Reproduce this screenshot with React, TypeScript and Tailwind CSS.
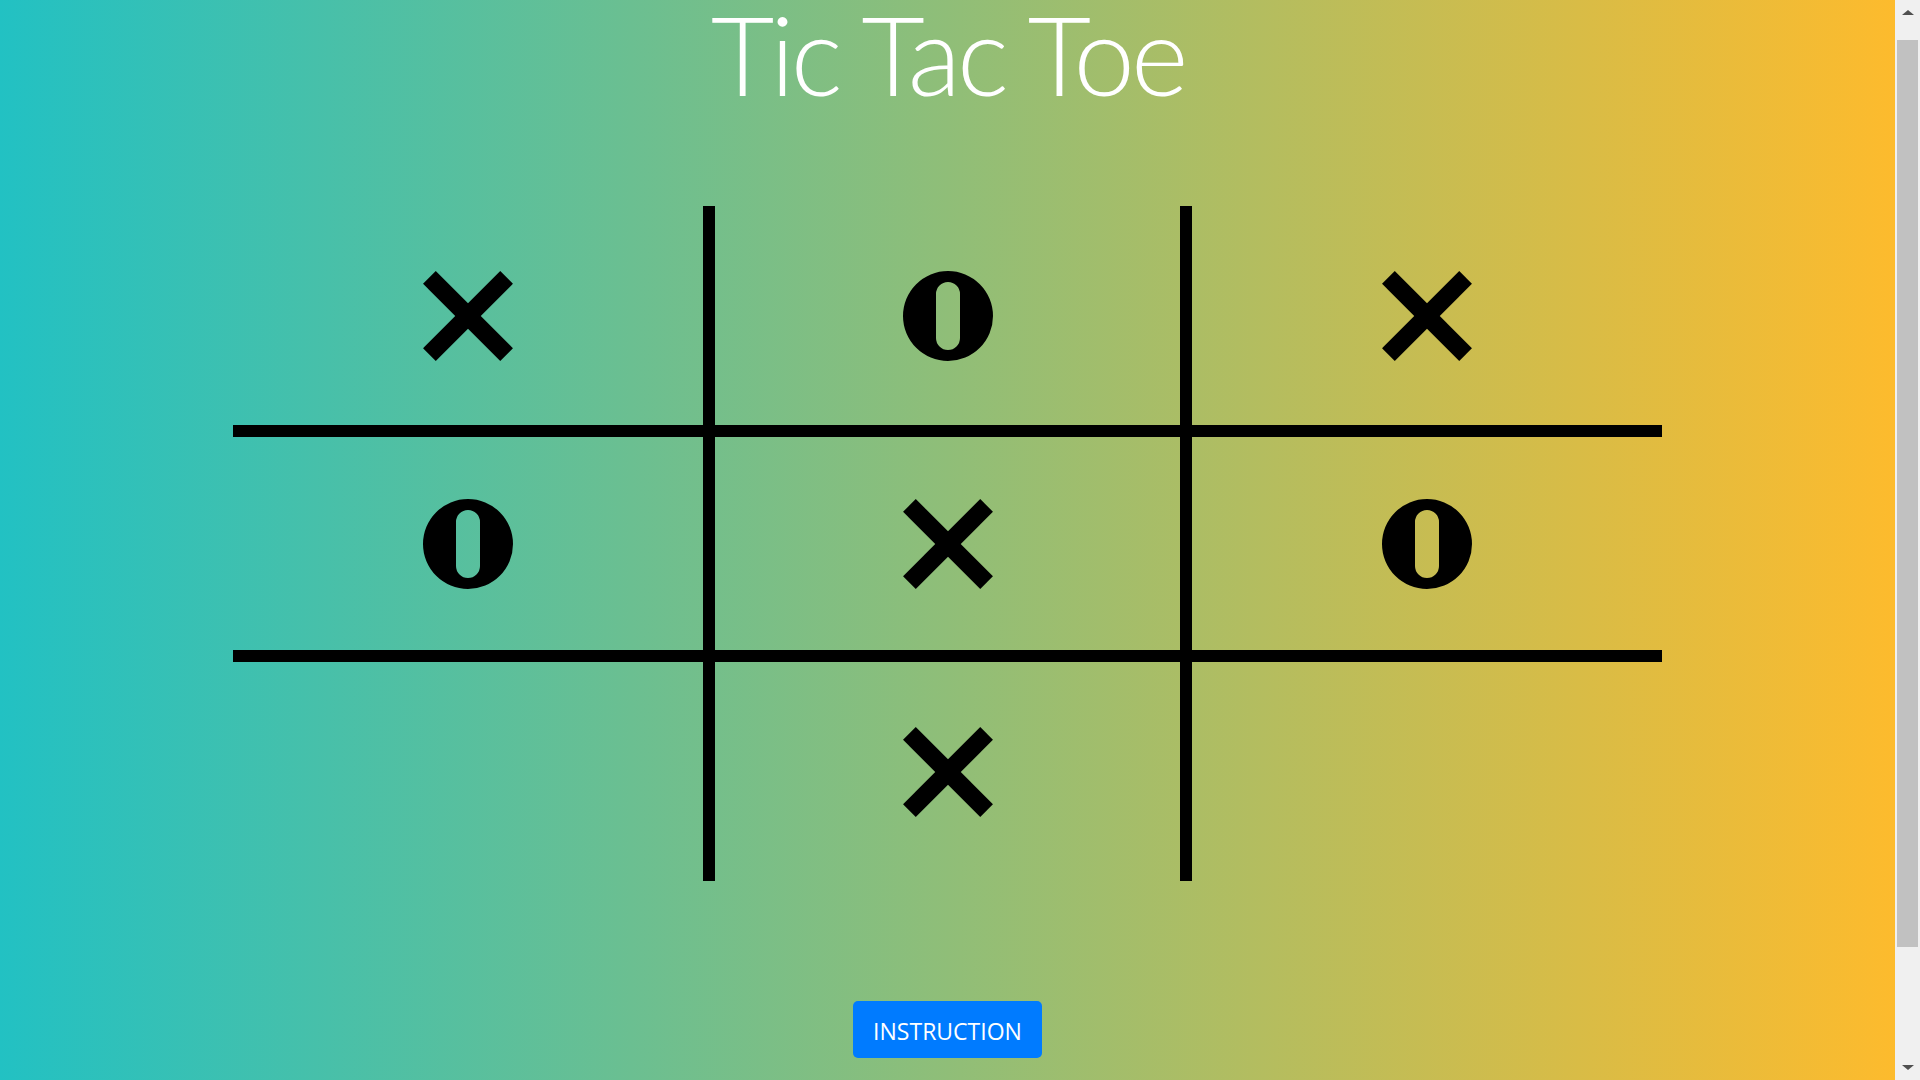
import React from 'react';

type Mark = 'X' | 'O' | null;

const BOARD: Mark[] = ['X', 'O', 'X', 'O', 'X', 'O', null, 'X', null];

function CrossMark() {
  return (
    <svg width="90" height="90" viewBox="0 0 90 90">
      <line x1="6.4" y1="6.4" x2="83.6" y2="83.6" stroke="#000" strokeWidth="18" />
      <line x1="83.6" y1="6.4" x2="6.4" y2="83.6" stroke="#000" strokeWidth="18" />
    </svg>
  );
}

function NoughtMark() {
  return (
    <svg width="90" height="90" viewBox="0 0 90 90">
      <path
        fillRule="evenodd"
        fill="#000"
        d="M0,45 a45,45 0 1,0 90,0 a45,45 0 1,0 -90,0 Z M33,23 a12,12 0 0,1 24,0 V67 a12,12 0 0,1 -24,0 Z"
      />
    </svg>
  );
}

// Cell borders draw the grid lines: middle column gets left/right, middle row gets top/bottom.
const CELL_CLASSES = [
  '',
  'border-x-[12px]',
  '',
  'border-y-[12px]',
  'border-[12px]',
  'border-y-[12px]',
  '',
  'border-x-[12px]',
  '',
];

function Board() {
  return (
    <div className="mt-[99px] grid w-[1429px] grid-cols-[470px_489px_470px] grid-rows-[219px_237px_219px]">
      {BOARD.map((mark, i) => (
        <div
          key={i}
          className={`flex items-center justify-center border-black ${CELL_CLASSES[i]}`}
        >
          {mark === 'X' && <CrossMark />}
          {mark === 'O' && <NoughtMark />}
        </div>
      ))}
    </div>
  );
}

function Scrollbar() {
  return (
    <div className="flex h-screen w-[25px] shrink-0 flex-col bg-[#f0f0f0]">
      <div className="flex h-[40px] justify-center pt-[10px]">
        <div className="h-0 w-0 border-x-[6px] border-b-[5px] border-x-transparent border-b-[#505050]" />
      </div>
      <div className="mx-[2px] h-[907px] bg-[#c1c1c1]" />
      <div className="flex flex-1 items-end justify-center pb-[10px]">
        <div className="h-0 w-0 border-x-[6px] border-t-[5px] border-x-transparent border-t-[#505050]" />
      </div>
    </div>
  );
}

export default function App() {
  return (
    <div className="flex h-screen w-full overflow-hidden">
      <div className="flex flex-1 flex-col items-center bg-[linear-gradient(90deg,#22c1c3,#fdbb2d)] font-['Open_Sans',sans-serif]">
        <h1 className="font-['Lato',sans-serif] text-[110px] leading-[107px] font-light tracking-[-4px] text-white">
          Tic Tac Toe
        </h1>
        <Board />
        <button
          type="button"
          className="mt-[120px] flex h-[57px] w-[189px] items-center justify-center rounded-[5px] bg-[#007bff] pt-[3px] text-[23px] text-white"
        >
          INSTRUCTION
        </button>
      </div>
      <Scrollbar />
    </div>
  );
}
